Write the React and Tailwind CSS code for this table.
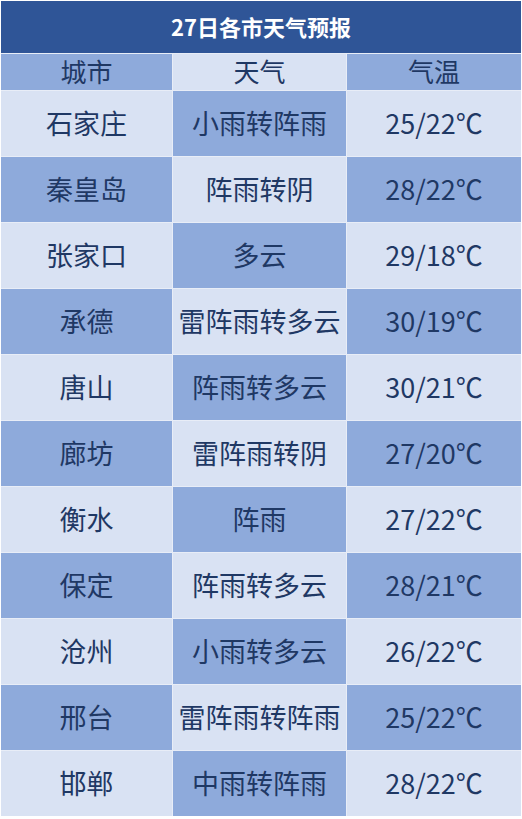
import React from "react";

const rows = [
  ["石家庄", "小雨转阵雨", "25/22℃"],
  ["秦皇岛", "阵雨转阴", "28/22℃"],
  ["张家口", "多云", "29/18℃"],
  ["承德", "雷阵雨转多云", "30/19℃"],
  ["唐山", "阵雨转多云", "30/21℃"],
  ["廊坊", "雷阵雨转阴", "27/20℃"],
  ["衡水", "阵雨", "27/22℃"],
  ["保定", "阵雨转多云", "28/21℃"],
  ["沧州", "小雨转多云", "26/22℃"],
  ["邢台", "雷阵雨转阵雨", "25/22℃"],
  ["邯郸", "中雨转阵雨", "28/22℃"],
];

const DARK = "bg-[#8eaadb]";
const LIGHT = "bg-[#d9e2f3]";

function Cell({ dark, children, h, size = "text-[27px]" }) {
  return (
    <div
      className={`${dark ? DARK : LIGHT} ${h} ${size} flex items-center justify-center pb-[2px] text-[#1f3864] leading-none`}
    >
      {children}
    </div>
  );
}

export default function App() {
  return (
    <div
      className="w-[522px] h-[819px] bg-white pt-px pl-px"
      style={{ fontFamily: '"Noto Sans CJK SC", "Noto Sans", sans-serif' }}
    >
      <div className="w-[520px] flex flex-col gap-px bg-[#e8edf7]">
        <div className="h-[52px] bg-[#2f5597] flex items-center justify-center pb-[2px] text-white text-[22px] font-bold leading-none">
          27日各市天气预报
        </div>
        <div className="grid grid-cols-[171px_173px_174px] gap-px">
          <Cell dark h="h-[36px]" size="text-[26px]">城市</Cell>
          <Cell h="h-[36px]" size="text-[26px]">天气</Cell>
          <Cell dark h="h-[36px]" size="text-[26px]">气温</Cell>
        </div>
        {rows.map((r, i) => {
          const even = i % 2 === 0;
          return (
            <div key={i} className="grid grid-cols-[171px_173px_174px] gap-px">
              <Cell dark={!even} h="h-[65px]">{r[0]}</Cell>
              <Cell dark={even} h="h-[65px]">{r[1]}</Cell>
              <Cell dark={!even} h="h-[65px]">{r[2]}</Cell>
            </div>
          );
        })}
      </div>
    </div>
  );
}
